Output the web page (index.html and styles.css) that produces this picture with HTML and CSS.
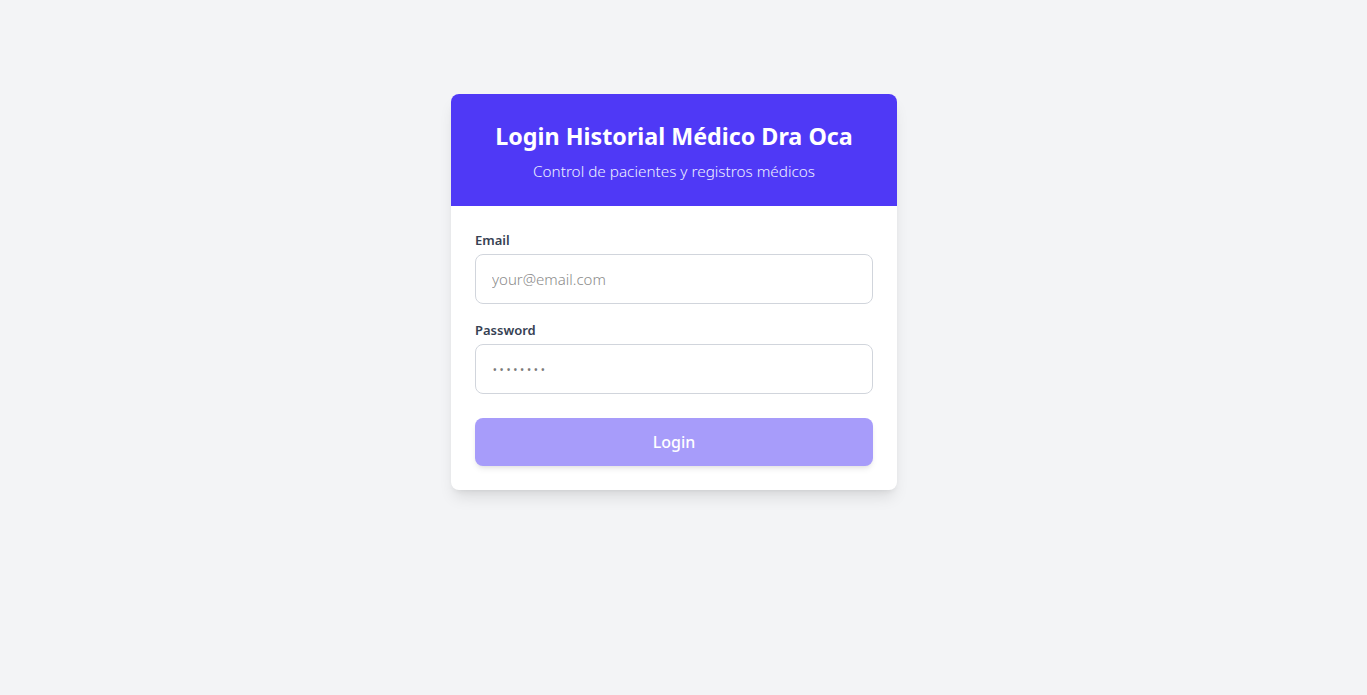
FILE: index.html
```html
<!DOCTYPE html>
<html lang="es">
<head>
<meta charset="utf-8">
<title>Login</title>
<link rel="stylesheet" href="styles.css">
</head>
<body>
<main class="page">
  <section class="card">
    <header class="card-head">
      <h1 class="title">Login Historial Médico Dra Oca</h1>
      <p class="subtitle">Control de pacientes y registros médicos</p>
    </header>
    <form class="card-body">
      <div class="field">
        <label class="label" for="email">Email</label>
        <input class="input" id="email" type="email" placeholder="your@email.com">
      </div>
      <div class="field">
        <label class="label" for="password">Password</label>
        <input class="input input-pass" id="password" type="password" placeholder="••••••••">
      </div>
      <button class="btn" type="button">Login</button>
    </form>
  </section>
</main>
</body>
</html>
```
FILE: styles.css
```css
* { box-sizing: border-box; }
html, body { margin: 0; padding: 0; }
body {
  background: #f3f4f6;
  font-family: "Noto Sans", "Open Sans", sans-serif;
  color: #101828;
}
.page {
  display: flex;
  justify-content: center;
  padding: 94px 19px 0 0;
  min-height: 695px;
}
.card {
  width: 446px;
  background: #fff;
  border-radius: 8px;
  overflow: hidden;
  box-shadow: 0 10px 15px -3px rgba(0,0,0,0.1), 0 4px 6px -4px rgba(0,0,0,0.1);
  align-self: flex-start;
}
.card-head {
  background: #4f39f6;
  color: #fff;
  text-align: center;
  padding: 26px 24px 23px;
}
.title {
  margin: 0;
  font-size: 23.3px;
  line-height: 32px;
  font-weight: 700;
}
.subtitle {
  margin: 7px 0 0;
  font-size: 15.3px;
  line-height: 24px;
  font-weight: 300;
  color: #eef0ff;
}
.card-body {
  padding: 24px;
  display: flex;
  flex-direction: column;
}
.field { display: flex; flex-direction: column; margin-bottom: 16px; }
.field + .field { margin-bottom: 24px; }
.label {
  font-size: 13px;
  line-height: 20px;
  font-weight: 600;
  color: #364153;
  margin-bottom: 4px;
}
.input {
  height: 50px;
  padding: 12px 16px;
  border: 1px solid #d1d5dc;
  border-radius: 8px;
  font-family: inherit;
  font-size: 15px;
  font-weight: 300;
  color: #101828;
  outline: none;
}
.input::placeholder { color: #8b8b8b; }
.input-pass::placeholder { letter-spacing: 1.2px; color: #7a7a7a; }
.btn {
  height: 48px;
  border: none;
  border-radius: 8px;
  background: #a79cfa;
  color: #fff;
  font-family: inherit;
  font-size: 16px;
  font-weight: 500;
  box-shadow: 0 4px 6px -1px rgba(0,0,0,0.08), 0 2px 4px -2px rgba(0,0,0,0.08);
}
```
